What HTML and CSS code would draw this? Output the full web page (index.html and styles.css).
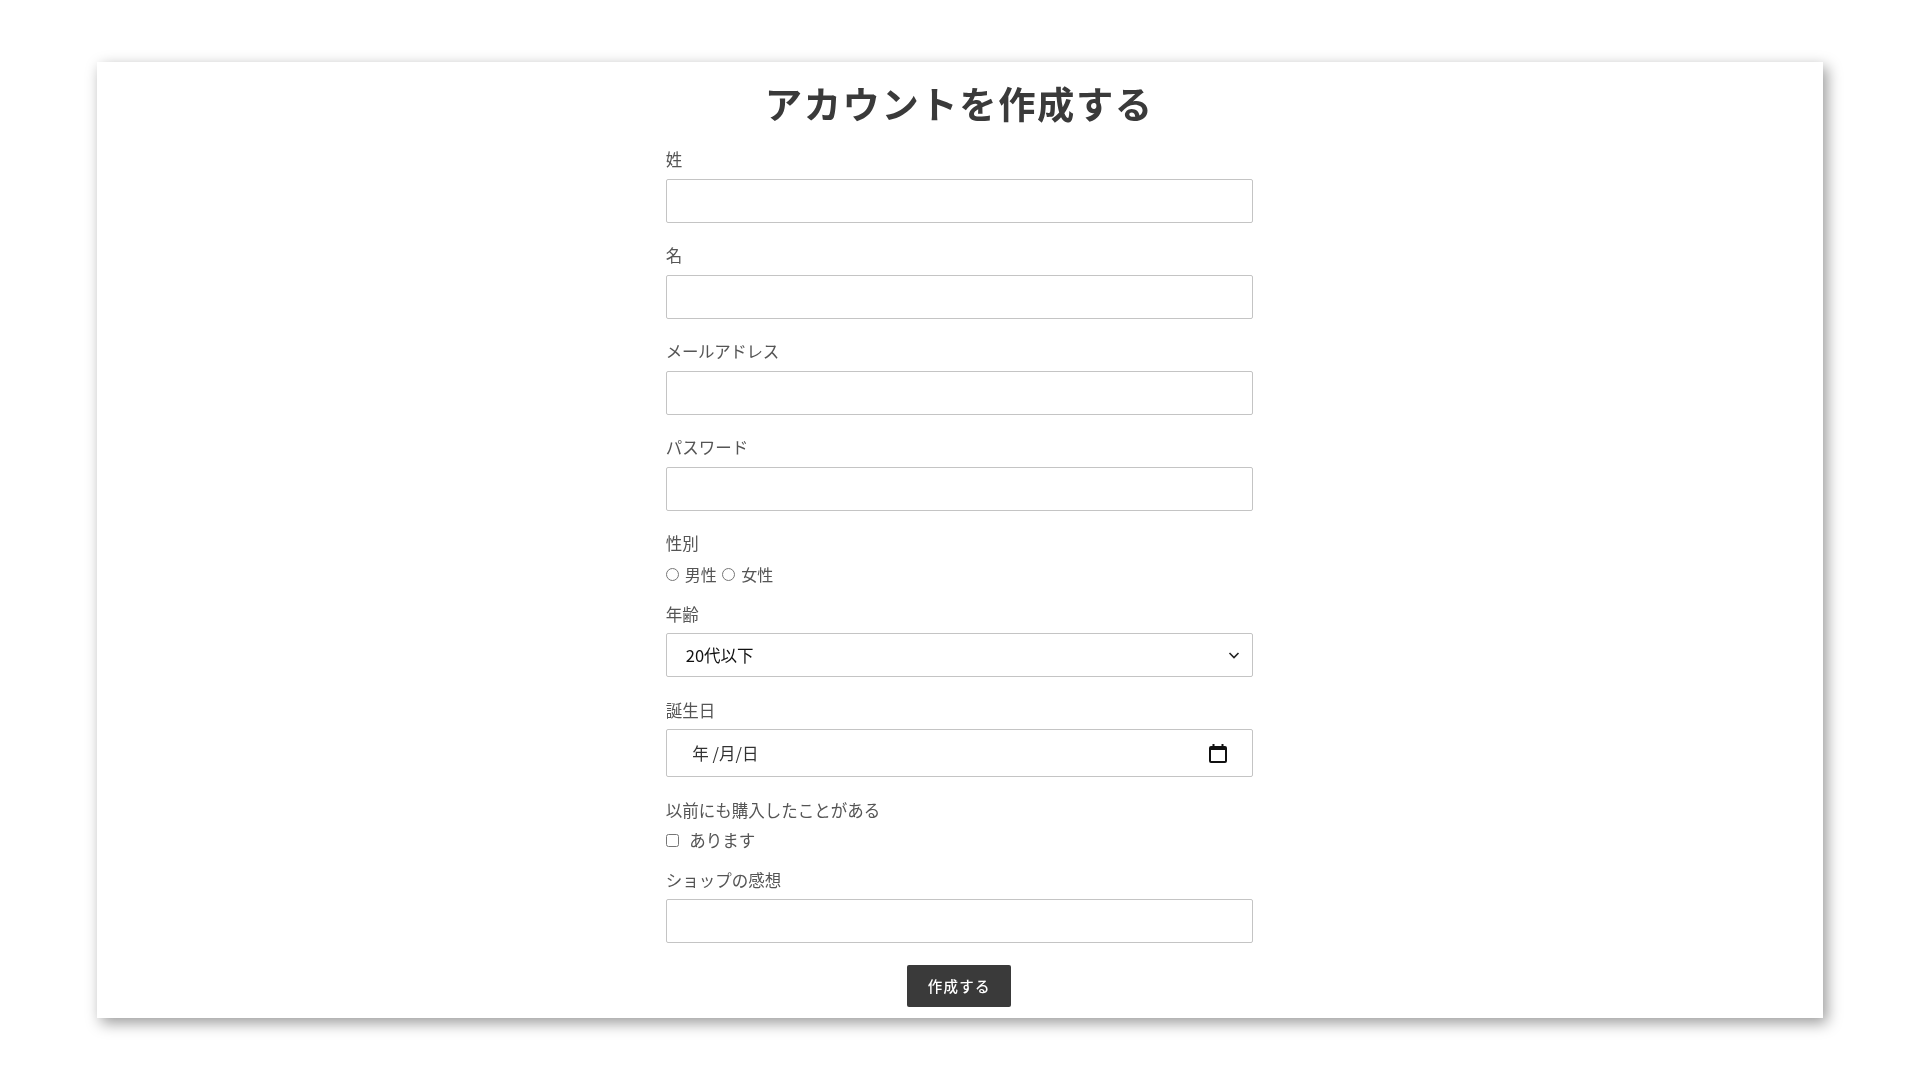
FILE: index.html
```html
<!DOCTYPE html>
<html lang="ja">
<head>
<meta charset="utf-8">
<title>アカウントを作成する</title>
<link rel="stylesheet" href="styles.css">
</head>
<body>
<main class="card">
  <h1 class="title">アカウントを作成する</h1>
  <form class="form">
    <div class="field">
      <label class="label" for="last">姓</label>
      <input class="control" id="last" type="text">
    </div>
    <div class="field">
      <label class="label" for="first">名</label>
      <input class="control" id="first" type="text">
    </div>
    <div class="field">
      <label class="label label-tight" for="mail">メールアドレス</label>
      <input class="control" id="mail" type="text">
    </div>
    <div class="field">
      <label class="label" for="pass">パスワード</label>
      <input class="control" id="pass" type="text">
    </div>
    <div class="field field-radio">
      <div class="label">性別</div>
      <div class="choices choices-radio">
        <input class="radio" type="radio" name="sex" id="male"><label class="choice" for="male">男性</label>
        <input class="radio" type="radio" name="sex" id="female"><label class="choice" for="female">女性</label>
      </div>
    </div>
    <div class="field">
      <label class="label" for="age">年齢</label>
      <div class="select-wrap">
        <select class="control select" id="age"><option>20代以下</option></select>
        <svg class="chevron" width="12" height="8" viewBox="0 0 12 8"><path d="M1.500 2l4.500 4.500L10.500 2" fill="none" stroke="#222" stroke-width="1.600"/></svg>
      </div>
    </div>
    <div class="field">
      <div class="label">誕生日</div>
      <div class="control date">
        <span>年 /月/日</span>
        <svg class="calendar" width="18" height="19" viewBox="0 0 18 19"><path d="M3.500 0h2v2h7V0h2v2H16a2 2 0 0 1 2 2v13a2 2 0 0 1-2 2H2a2 2 0 0 1-2-2V4a2 2 0 0 1 2-2h1.500zM2 6V17h14V6z" fill="#111"/></svg>
      </div>
    </div>
    <div class="field field-check">
      <div class="label">以前にも購入したことがある</div>
      <div class="choices">
        <input class="check" type="checkbox" id="bought"><label class="choice choice-check" for="bought">あります</label>
      </div>
    </div>
    <div class="field">
      <label class="label" for="review">ショップの感想</label>
      <input class="control" id="review" type="text">
    </div>
    <div class="actions">
      <button class="submit" type="button">作成する</button>
    </div>
  </form>
</main>
</body>
</html>
```

FILE: styles.css
```css
* { box-sizing: border-box; }
html, body { margin: 0; background: #fff; }
body {
  padding: 62px 97.500px 0 97px;
  height: 1080px;
  overflow: hidden;
  font-family: "Noto Sans CJK JP", "Liberation Sans", sans-serif;
  color: #555;
}
.card {
  background: #fff;
  height: 956px;
  padding: 17.600px 1px 0 0;
  box-shadow: 4px 5px 14px rgba(0, 0, 0, .4);
}
.title {
  margin: 0 0 22.900px;
  font-size: 37.300px;
  line-height: 46px;
  font-weight: 700;
  letter-spacing: 1.600px;
  text-align: center;
  color: #3a3a3a;
  filter: blur(.35px);
}
.form { width: 587px; margin: 0 auto; filter: blur(.35px); }
.field { margin-bottom: 21.500px; }
.field-radio { margin-bottom: 16.300px; }
.field-check { margin-bottom: 16px; }
.label {
  display: block;
  margin-bottom: 8.500px;
  font-size: 16.500px;
  line-height: 22px;
  color: #555;
}
.label-tight { letter-spacing: -.35px; }
.control {
  display: block;
  width: 100%;
  height: 44px;
  margin: 0;
  background: #fff;
  border: 1px solid #c4c4c4;
  border-radius: 2px;
  font-family: inherit;
  font-size: 16.500px;
  color: #111;
  outline: none;
}
.choices {
  display: flex;
  align-items: center;
  height: 24px;
  margin-top: -.5px;
  font-size: 16.500px;
  line-height: 22px;
  color: #555;
}
.choices-radio { font-size: 16px; }
.radio, .check { width: 13px; height: 13px; margin: 0; }
.choice { margin: 0 5.500px 0 6px; padding-bottom: 2px; }
.choices-radio .choice { padding-bottom: 0; }
.choice-check { margin-left: 10.500px; }
.select-wrap { position: relative; }
.select {
  appearance: none;
  padding: 0 0 0 19px;
}
.chevron { position: absolute; right: 13px; top: 18px; }
.date {
  display: flex;
  align-items: center;
  justify-content: space-between;
  height: 48px;
  padding: 0 25px 0 25.500px;
  line-height: 24px;
  color: #333;
}
.actions { display: flex; justify-content: center; }
.submit {
  width: 104px;
  height: 42.500px;
  padding: 0 0 2px;
  margin: 0;
  background: #3a3a3a;
  border: 0;
  border-radius: 2px;
  font-family: inherit;
  font-size: 14.500px;
  font-weight: 500;
  letter-spacing: 1.200px;
  color: #fff;
}
```
